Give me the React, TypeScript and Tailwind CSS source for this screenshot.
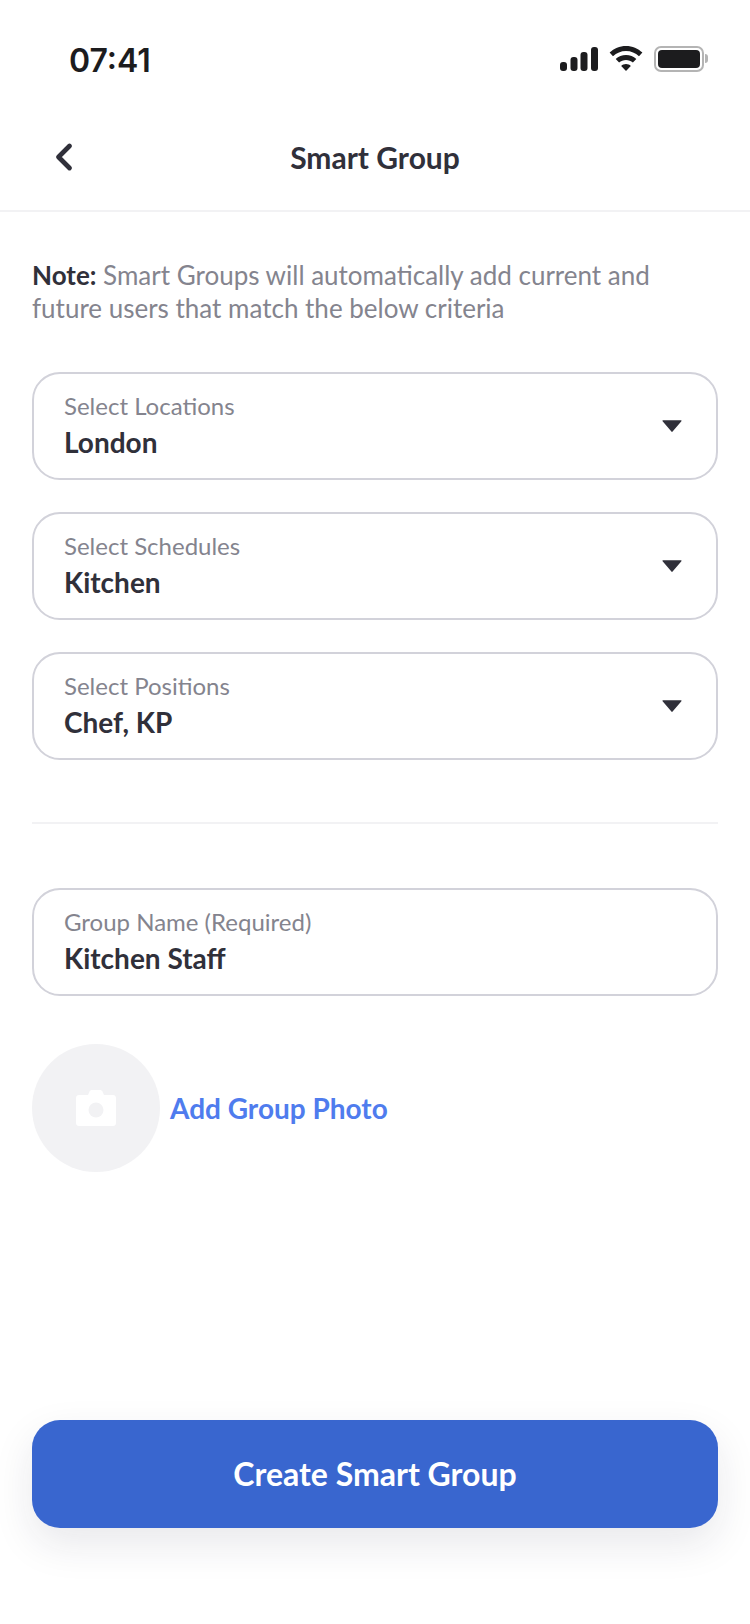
import { ChevronLeft } from "lucide-react";

function Field({ label, value, caret = true }: { label: string; value: string; caret?: boolean }) {
  return (
    <div className="flex h-[108px] items-center justify-between rounded-[28px] border-2 border-[#d2d2da] pl-[30px] pr-[34px]">
      <div className="mb-[5px] flex flex-col">
        <span className="text-[24px] leading-[36px] text-[#84848e]">{label}</span>
        <span className="text-[28px] leading-[36px] font-bold text-[#30303a]">{value}</span>
      </div>
      {caret && (
        <svg width="20" height="14" viewBox="0 0 20 14" className="mb-[1px]" aria-hidden="true">
          <path d="M1.2 1.2h17.6c.6 0 .9.6.6 1.1L10.6 12.6c-.3.4-.9.4-1.2 0L.6 2.3C.3 1.8.6 1.2 1.2 1.2z" fill="#30303a" />
        </svg>
      )}
    </div>
  );
}

function StatusIcons() {
  return (
    <div className="mb-[1px] flex items-center gap-[10px]">
      <svg width="38" height="24" viewBox="0 0 38 24" aria-hidden="true">
        <rect x="0" y="15" width="7" height="9" rx="3" fill="#1c1c1e" />
        <rect x="10.5" y="10" width="7" height="14" rx="3" fill="#1c1c1e" />
        <rect x="20.5" y="5" width="7" height="19" rx="3" fill="#1c1c1e" />
        <rect x="31" y="0" width="7" height="24" rx="3" fill="#1c1c1e" />
      </svg>
      <svg width="36" height="25" viewBox="0 0 34 25" aria-hidden="true">
        <path d="M17 0C10.5 0 5 2.5.6 6.6l3.4 3.6C7.5 7 12 5 17 5s9.5 2 13 5.2l3.4-3.6C29 2.5 23.5 0 17 0z" fill="#1c1c1e" />
        <path d="M17 9c-4 0-7.5 1.5-10.3 4.1l3.4 3.5C12 15 14.400 14 17 14s5 1 6.900 2.600l3.400-3.500C24.500 10.500 21 9 17 9z" fill="#1c1c1e" />
        <path d="M17 18c-1.900 0-3.600.7-4.800 1.900L17 25l4.800-5.100C20.600 18.700 18.900 18 17 18z" fill="#1c1c1e" />
      </svg>
      <div className="flex items-center gap-[1px]">
        <div className="flex h-[26px] w-[50px] items-center justify-center rounded-[7px] border-2 border-[#b4b4b4]">
          <div className="h-[18px] w-[42px] rounded-[4px] bg-[#1c1c1e]" />
        </div>
        <div className="h-[9px] w-[3px] rounded-r-full bg-[#b4b4b4]" />
      </div>
    </div>
  );
}

export default function App() {
  return (
    <div className="flex h-[1624px] w-[750px] flex-col overflow-hidden bg-white font-['Lato',sans-serif]">
      <div className="flex h-[118px] items-center justify-between pl-[69px] pr-[42px]">
        <span className="mt-[4px] font-['Inter',sans-serif] text-[32px] font-semibold text-[#1c1c1e]">07:41</span>
        <StatusIcons />
      </div>

      <div className="relative flex h-[94px] items-center justify-center border-b-2 border-[#f2f2f4] pb-[14px]">
        <ChevronLeft className="absolute left-[42px] top-[17px]" size={44} strokeWidth={2.6} color="#30303a" />
        <span className="text-[30px] font-bold text-[#30303a]">Smart Group</span>
      </div>

      <div className="flex flex-1 flex-col px-[32px]">
        <p className="mt-[47px] text-[26px] leading-[33px] text-[#84848e]">
          <span className="font-bold text-[#30303a]">Note:</span> Smart Groups will automatically add current and
          future users that match the below criteria
        </p>

        <div className="mt-[47px] flex flex-col gap-[32px]">
          <Field label="Select Locations" value="London" />
          <Field label="Select Schedules" value="Kitchen" />
          <Field label="Select Positions" value="Chef, KP" />
        </div>

        <div className="mt-[62px] h-[2px] bg-[#f2f2f4]" />

        <div className="mt-[64px]">
          <Field label="Group Name (Required)" value="Kitchen Staff" caret={false} />
        </div>

        <div className="mt-[48px] flex items-center gap-[10px]">
          <div className="flex h-[128px] w-[128px] items-center justify-center rounded-full bg-[#f2f2f4]">
            <svg width="40" height="36" viewBox="0 0 40 36" aria-hidden="true">
              <path
                d="M12 5l1.5-3.5C14 .5 15 0 16 0h8c1 0 2 .5 2.5 1.500L28 5h9c1.700 0 3 1.300 3 3v25c0 1.700-1.300 3-3 3H3c-1.700 0-3-1.300-3-3V8c0-1.700 1.300-3 3-3h9z"
                fill="#ffffff"
              />
              <circle cx="20" cy="20" r="7.5" fill="#f2f2f4" />
            </svg>
          </div>
          <span className="text-[28px] font-bold text-[#4f7cee]">Add Group Photo</span>
        </div>

        <button className="mt-[248px] flex h-[108px] items-center justify-center rounded-[28px] bg-[#3966cf] text-[32px] font-bold text-white shadow-[0_16px_40px_rgba(30,30,60,0.1)]">
          Create Smart Group
        </button>
      </div>
    </div>
  );
}
